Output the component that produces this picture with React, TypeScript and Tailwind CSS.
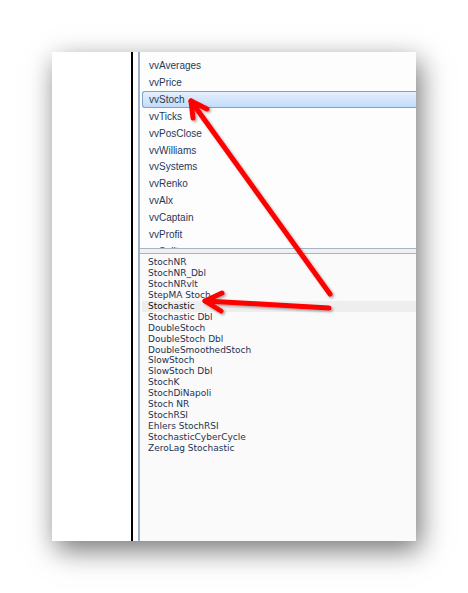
const strategies = [
  "vvAverages",
  "vvPrice",
  "vvStoch",
  "vvTicks",
  "vvPosClose",
  "vvWilliams",
  "vvSystems",
  "vvRenko",
  "vvAlx",
  "vvCaptain",
  "vvProfit",
  "vvSplit",
];

const indicators = [
  "StochNR",
  "StochNR_Dbl",
  "StochNRvlt",
  "StepMA Stoch",
  "Stochastic",
  "Stochastic Dbl",
  "DoubleStoch",
  "DoubleStoch Dbl",
  "DoubleSmoothedStoch",
  "SlowStoch",
  "SlowStoch Dbl",
  "StochK",
  "StochDiNapoli",
  "Stoch NR",
  "StochRSI",
  "Ehlers StochRSI",
  "StochasticCyberCycle",
  "ZeroLag Stochastic",
];

const Arrows = () => (
  <svg className="absolute inset-0 pointer-events-none" width="468" height="593" viewBox="0 0 468 593">
    <defs>
      <filter id="arrowShadow" x="-20%" y="-20%" width="140%" height="140%">
        <feDropShadow dx="1.5" dy="1.5" stdDeviation="1.2" floodColor="#000" floodOpacity="0.35" />
      </filter>
    </defs>
    <g
      stroke="#ff0000"
      strokeWidth="5"
      strokeLinecap="round"
      strokeLinejoin="round"
      fill="none"
      filter="url(#arrowShadow)"
    >
      <path d="M330 294 L191 101" />
      <path d="M207 109 L191 101 L193 118" />
      <path d="M329 308 L205 301" />
      <path d="M222 293 L205 301 L221 311" />
    </g>
  </svg>
);

export default function App() {
  return (
    <div className="relative w-[468px] h-[593px] bg-white pt-[52px] pl-[52px] overflow-hidden">
      <div className="flex w-[364px] h-[489px] bg-white shadow-[4px_9px_26px_rgba(0,0,0,0.55)]">
        {/* left pane */}
        <div className="w-[79px] bg-white" />
        <div className="w-[2px] bg-black" />
        <div className="w-[5px] bg-white" />
        <div className="w-[2px] bg-[#9fb0c8]" />

        {/* lists */}
        <div className="flex-1 flex flex-col min-w-0 bg-[#fafafa]">
          <div className="h-[196px] overflow-hidden bg-[#fdfdfd] pt-[5.5px] pl-[2px]">
            {strategies.map((name) => {
              const selected = name === "vvStoch";
              return (
                <div
                  key={name}
                  className={
                    selected
                      ? "h-[16.85px] flex items-center pl-[6px] border border-r-0 border-[#7da2ce] rounded-l-[3px] bg-gradient-to-b from-[#e4f0fd] to-[#c4dcfa] text-[#1e395b]"
                      : "h-[16.85px] flex items-center pl-[7px] text-[#1e395b]"
                  }
                  style={{ fontFamily: '"Liberation Sans", Arial, sans-serif', fontSize: "10px" }}
                >
                  {name}
                </div>
              );
            })}
          </div>

          <div className="h-px bg-[#a5b4c8]" />
          <div className="h-[4px] bg-[#f0f0f0]" />
          <div className="h-px bg-[#a5b4c8]" />

          <div className="flex-1 pt-[3px] pl-[2px]">
            {indicators.map((name) => {
              const active = name === "Stochastic";
              return (
                <div
                  key={name}
                  className={
                    active
                      ? "h-[10.95px] flex items-center pl-[6px] bg-[#eeeeee] text-[#111111]"
                      : "h-[10.95px] flex items-center pl-[6px] text-[#1e3250]"
                  }
                  style={{ fontFamily: '"DejaVu Sans", Verdana, sans-serif', fontSize: "9px", lineHeight: "10.95px" }}
                >
                  {name}
                </div>
              );
            })}
          </div>
        </div>
      </div>
      <Arrows />
    </div>
  );
}
